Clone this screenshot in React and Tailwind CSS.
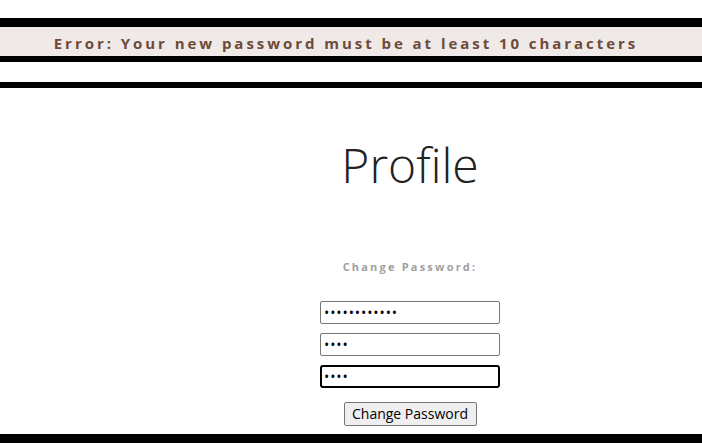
export default function App() {
  return (
    <div className="w-[702px] h-[443px] overflow-hidden bg-white relative" style={{ fontFamily: '"Open Sans", sans-serif' }}>
      <div className="h-[18px]" />
      <div className="border-t-[9px] border-b-[6px] border-black bg-[#efeae7] h-[44px] flex items-center justify-center pt-[3px]">
        <p className="text-[15px] font-bold tracking-[2.95px] text-[#6e4a3a] -ml-[10px]">Error: Your new password must be at least 10 characters</p>
      </div>
      <div className="h-[20px]" />
      <div className="h-[6px] bg-black" />
      <div className="flex">
        <div className="w-[118px] shrink-0" />
        <div className="flex-1 flex flex-col items-center">
          <h1 className="mt-[47px] text-[48px] font-light tracking-normal text-[#222] leading-[60px]">Profile</h1>
          <p className="mt-[64px] text-[11px] font-bold tracking-[2.2px] text-[#a0a0a0] leading-[16px]">Change Password:</p>
          <div className="mt-[26px] flex flex-col gap-[9px]">
            <input type="password" defaultValue="aaaaaaaaaaaa" className="w-[180px] h-[23px] border border-[#767676] rounded-[2px] px-[3px] text-[14px] tracking-[0.9px]" />
            <input type="password" defaultValue="aaaa" className="w-[180px] h-[23px] border border-[#767676] rounded-[2px] px-[3px] text-[14px] tracking-[0.9px]" />
            <input type="password" defaultValue="aaaa" className="w-[180px] h-[23px] border-2 border-black rounded-[3px] px-[2px] text-[14px] tracking-[0.9px]" />
          </div>
          <button className="mt-[14px] w-[133px] h-[24px] bg-[#efefef] border border-[#767676] rounded-[2px] text-[14px] text-black leading-none">Change Password</button>
        </div>
      </div>
      <div className="absolute left-0 right-0 bottom-0 h-[9px] bg-black" />
    </div>
  );
}
